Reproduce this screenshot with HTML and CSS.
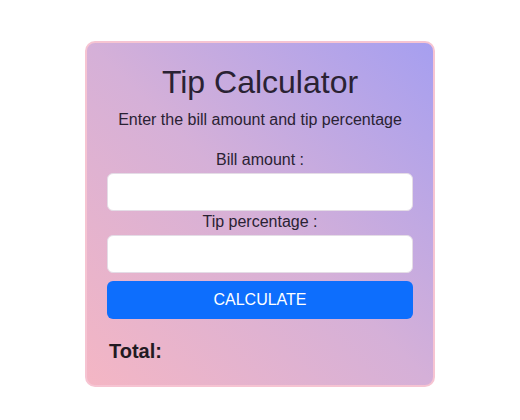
FILE: index.html
```html
<!DOCTYPE html>
<html>
<head>
<meta charset="utf-8">
<link rel="stylesheet" href="styles.css">
</head>
<body>
<div class="card">
  <h1 class="title">Tip Calculator</h1>
  <p class="subtitle">Enter the bill amount and tip percentage</p>
  <label class="label label-first" for="bill">Bill amount :</label>
  <input class="field" id="bill" type="text">
  <label class="label" for="tip">Tip percentage :</label>
  <input class="field" id="tip" type="text">
  <button class="btn">CALCULATE</button>
  <div class="total">Total:</div>
</div>
</body>
</html>
```
FILE: styles.css
```css
html, body {
  margin: 0;
  padding: 0;
  background: #fff;
}
body {
  font-family: "Liberation Sans", Arial, sans-serif;
  color: #2a2233;
}
.card {
  box-sizing: border-box;
  width: 350px;
  margin: 41px auto 0;
  border: 2px solid #f6c4d2;
  border-radius: 10px;
  padding: 20px 20px 22px;
  background: linear-gradient(to top right, #f4b6c4 0%, #d5b0d8 50%, #a69ff0 100%);
  display: flex;
  flex-direction: column;
}
.title {
  margin: 0;
  font-size: 32px;
  line-height: 38px;
  font-weight: normal;
  text-align: center;
}
.subtitle {
  margin: 9px 0 0;
  font-size: 16px;
  line-height: 20px;
  text-align: center;
}
.label {
  display: block;
  margin-top: 1px;
  font-size: 16px;
  line-height: 20px;
  text-align: center;
}
.label-first {
  margin-top: 20px;
}
.field {
  box-sizing: border-box;
  margin-top: 3px;
  width: 100%;
  height: 38px;
  border: 1px solid #e4dce6;
  border-radius: 6px;
  background: #fff;
}
.btn {
  box-sizing: border-box;
  margin-top: 8px;
  width: 100%;
  height: 38px;
  border: none;
  border-radius: 6px;
  background: #0d6efd;
  color: #fff;
  font-family: "Liberation Sans", Arial, sans-serif;
  font-size: 16px;
}
.total {
  margin-top: 20px;
  padding-left: 2px;
  font-size: 20px;
  line-height: 24px;
  font-weight: bold;
  color: #221a22;
}
```
